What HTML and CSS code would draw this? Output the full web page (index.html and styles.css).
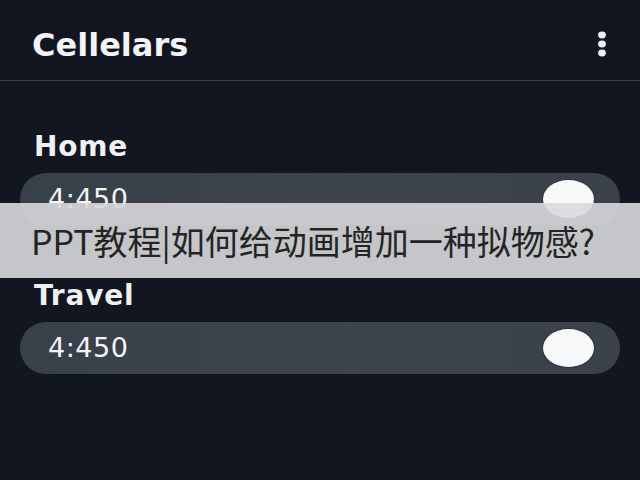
FILE: index.html
```html
<!DOCTYPE html>
<html lang="zh">
<head>
<meta charset="utf-8">
<title>Cellelars</title>
<link rel="stylesheet" href="styles.css">
</head>
<body>
<div class="app">
  <header class="topbar">
    <h1 class="title">Cellelars</h1>
    <button class="menu" aria-label="More">
      <svg width="12" height="28" viewBox="0 0 12 28">
        <ellipse cx="6" cy="5" rx="3.9" ry="3.4" fill="#eceef1"/>
        <ellipse cx="6" cy="14" rx="3.9" ry="3.4" fill="#eceef1"/>
        <ellipse cx="6" cy="23" rx="3.9" ry="3.4" fill="#eceef1"/>
      </svg>
    </button>
  </header>
  <main class="list">
    <section class="group">
      <h2 class="label">Home</h2>
      <div class="pill">
        <span class="value">4:450</span>
        <span class="knob"></span>
      </div>
    </section>
    <section class="group">
      <h2 class="label">Travel</h2>
      <div class="pill">
        <span class="value">4:450</span>
        <span class="knob"></span>
      </div>
    </section>
  </main>
  <div class="caption">PPT教程|如何给动画增加一种拟物感?</div>
</div>
</body>
</html>
```
FILE: styles.css
```css
html, body {
  margin: 0;
  padding: 0;
}
body {
  background: #121621;
  font-family: "DejaVu Sans", "Liberation Sans", sans-serif;
  color: #f1f2f4;
  width: 640px;
  height: 480px;
  overflow: hidden;
}
.app {
  position: relative;
  height: 480px;
}
.topbar {
  height: 81px;
  box-sizing: border-box;
  display: flex;
  align-items: flex-start;
  justify-content: space-between;
  padding: 26px 32px 0 32px;
  border-bottom: 1px solid #393e47;
}
.title {
  margin: 0;
  font-size: 32px;
  line-height: 38px;
  font-weight: 700;
  color: #f3f4f6;
}
.menu {
  background: none;
  border: 0;
  padding: 0;
  margin-top: 4px;
  display: flex;
}
.list {
  padding: 51px 20px 0;
  display: flex;
  flex-direction: column;
  gap: 56px;
}
.group {
  display: flex;
  flex-direction: column;
  gap: 11px;
}
.label {
  margin: 0;
  padding-left: 14px;
  font-size: 28px;
  font-weight: 700;
  line-height: 30px;
  letter-spacing: 0.8px;
  color: #eef0f2;
}
.pill {
  height: 52px;
  border-radius: 26px;
  background: linear-gradient(90deg, #384049, #3d444c 55%, #3a4148);
  display: flex;
  align-items: center;
  justify-content: space-between;
  padding: 0 26px 0 28px;
}
.value {
  font-size: 27px;
  line-height: 32px;
  letter-spacing: 0.5px;
  color: #f3f4f6;
}
.knob {
  width: 51px;
  height: 38px;
  border-radius: 50%;
  background: #f6f8f9;
  box-shadow: 0 0 0 1px rgba(20, 30, 35, 0.35);
}
.caption {
  position: absolute;
  left: 0;
  right: 0;
  top: 203px;
  height: 75px;
  display: flex;
  align-items: center;
  padding-left: 31px;
  background: rgba(216, 217, 219, 0.9);
  color: #242424;
  font-family: "Noto Sans CJK SC", sans-serif;
  font-size: 34px;
}
```
